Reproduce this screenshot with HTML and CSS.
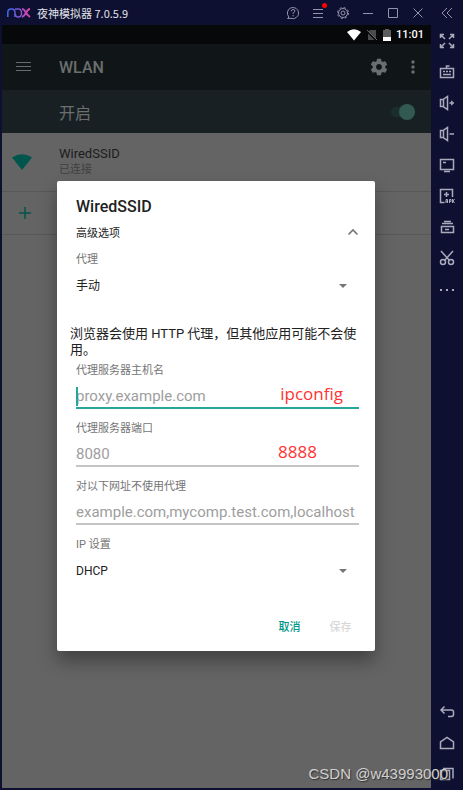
FILE: index.html
```
<!DOCTYPE html>
<html lang="zh-CN">

<head>
    <meta charset="UTF-8">
    <meta name="viewport" content="width=device-width, initial-scale=1.0">
    <title>夜神模拟器</title>
    <link rel="stylesheet" href="styles.css">
</head>

<body>
    <div class="window">
        <header class="titlebar">
            <svg class="logo" width="24" height="10" viewBox="0 0 24 10">
                <defs>
                    <linearGradient id="nox" x1="0" x2="24" y1="0" y2="0" gradientUnits="userSpaceOnUse">
                        <stop offset="0" stop-color="#3a6cf0" />
                        <stop offset=".5" stop-color="#7a55d8" />
                        <stop offset="1" stop-color="#f0409a" />
                    </linearGradient>
                </defs>
                <g fill="none" stroke="url(#nox)" stroke-width="1.5">
                    <path d="M.8 9V4.500Q.8 1 4 1h.8Q8 1 8 4.500V9" />
                    <path d="M8 1h3.500q3 0 3 4t-3 4h-.5q-2.500 0-2.800-3" />
                    <path stroke-width="2" d="M15 1q2 0 3.500 3t4.500 5M23 1q-2 0-3.800 3.500T15 9" />
                </g>
            </svg>
            <h1>夜神模拟器 7.0.5.9</h1>
            <div class="win-btns">
                <button aria-label="帮助"><svg width="14" height="14" viewBox="0 0 14 14"><path d="M1.500 12.500 3 11A5.600 5.600 0 1 1 5 12.300L1.500 12.500ZM5.300 5.300q0-1.800 1.800-1.800t1.800 1.500q0 1-1.800 2V8M7.100 9v1.300" /></svg></button>
                <button class="has-dot" aria-label="菜单"><svg width="14" height="14" viewBox="0 0 14 14"><path d="M2 3.500h10M2 7.500h10M2 11.500h10" /></svg></button>
                <button aria-label="设置"><svg width="14" height="14" viewBox="0 0 14 14"><circle cx="7" cy="7" r="4.500" /><circle cx="7" cy="7" r="2" /><circle cx="7" cy="7" r="5.500" stroke-dasharray="2.200 2.120" /></svg></button>
                <button aria-label="最小化"><svg width="14" height="14" viewBox="0 0 14 14"><path d="M2 7.500h10" /></svg></button>
                <button aria-label="最大化"><svg width="14" height="14" viewBox="0 0 14 14"><path d="M2.500 2.500h9v9h-9z" /></svg></button>
                <button aria-label="关闭"><svg width="14" height="14" viewBox="0 0 14 14"><path d="m2.500 2.500 9 9m0-9-9 9" /></svg></button>
                <button class="fold" aria-label="收起"><svg width="14" height="14" viewBox="0 0 14 14"><path d="M7 2 2 7l5 5M12 2 7 7l5 5" /></svg></button>
            </div>
        </header>

        <div class="main">
            <div class="screen">
                <div class="status">
                    <svg width="14" height="12" viewBox="0 0 14 12"><path fill="#fff" d="M0 3Q7-2.500 14 3L7 11.500Z" /></svg>
                    <svg width="12" height="12" viewBox="0 0 12 12"><path fill="#4a4c4c" d="M4 1h6v10H2V4z" /><path stroke="#08090a" stroke-width="2" d="m1 2 10 10" /><path stroke="#6a6c6c" d="m1 1 10 10" /></svg>
                    <svg width="8" height="12" viewBox="0 0 8 12"><path fill="#5c5e5e" d="M2 0h4v1h2v7H0V1h2z" /><path fill="#fff" d="M0 8h8v4H0z" /></svg>
                    <span>11:01</span>
                </div>

                <div class="toolbar">
                    <button class="lead" aria-label="导航"><svg width="16" height="12" viewBox="0 0 16 12"><path stroke="#686b6c" d="M0 1.500h15M0 5.500h15M0 9.500h15" /></svg></button>
                    <h2>WLAN</h2>
                    <button aria-label="设置"><svg width="20" height="20" viewBox="0 0 24 24"><path fill="#6b6e6f" d="M19.430 12.980c.04-.32.07-.64.07-.98s-.03-.66-.07-.98l2.110-1.650c.19-.15.24-.42.12-.64l-2-3.460c-.12-.22-.39-.3-.61-.22l-2.490 1c-.52-.4-1.080-.73-1.690-.98l-.38-2.650C14.460 2.180 14.250 2 14 2h-4c-.25 0-.46.18-.49.42l-.38 2.650c-.61.25-1.170.59-1.690.98l-2.490-1c-.23-.09-.49 0-.61.22l-2 3.460c-.13.22-.07.49.12.64l2.110 1.650c-.04.32-.07.65-.07.98s.03.66.07.98l-2.110 1.650c-.19.15-.24.42-.12.64l2 3.460c.12.22.39.3.61.22l2.490-1c.52.4 1.080.73 1.690.98l.38 2.650c.03.24.24.42.49.42h4c.25 0 .46-.18.49-.42l.38-2.650c.61-.25 1.170-.59 1.690-.98l2.490 1c.23.09.49 0 .61-.22l2-3.460c.12-.22.07-.49-.12-.64l-2.110-1.650zM12 15.500c-1.930 0-3.500-1.570-3.500-3.500s1.570-3.500 3.500-3.500 3.500 1.570 3.500 3.500-1.570 3.500-3.500 3.500z" /></svg></button>
                    <button aria-label="更多"><svg width="4" height="14" viewBox="0 0 4 14"><g fill="#6b6e6f"><circle cx="2" cy="2" r="1.700" /><circle cx="2" cy="7" r="1.700" /><circle cx="2" cy="12" r="1.700" /></g></svg></button>
                </div>

                <div class="switch-bar">
                    <label for="wlan">开启</label>
                    <input type="checkbox" id="wlan" class="switch" checked>
                </div>

                <ul class="networks">
                    <li class="network">
                        <svg width="20" height="16" viewBox="0 0 20 16"><path fill="#00564c" d="M0 3.500Q10-3 20 3.500L10 16Z" /></svg>
                        <div>
                            <p>WiredSSID</p>
                            <p class="sub">已连接</p>
                        </div>
                    </li>
                    <li class="network add">
                        <svg width="12" height="12" viewBox="0 0 12 12"><path stroke="#00564c" stroke-width="1.500" d="M6 0v12M0 6h12" /></svg>
                    </li>
                </ul>

                <div class="overlay">
                    <form class="dialog">
                        <h3>WiredSSID</h3>
                        <button type="button" class="advanced">高级选项
                            <svg width="12" height="8" viewBox="0 0 12 8"><path fill="none" stroke="#757575" stroke-width="1.600" d="m1.500 6.500 4.500-4.500 4.500 4.500" /></svg>
                        </button>
                        <div class="field">
                            <label for="proxy">代理</label>
                            <select id="proxy">
                                <option>手动</option>
                            </select>
                        </div>
                        <p class="tip">浏览器会使用 HTTP 代理，但其他应用可能不会使用。</p>
                        <div class="field focus">
                            <label for="host">代理服务器主机名</label>
                            <input type="text" id="host" placeholder="proxy.example.com">
                            <span class="note">ipconfig</span>
                        </div>
                        <div class="field">
                            <label for="port">代理服务器端口</label>
                            <input type="text" id="port" placeholder="8080">
                            <span class="note">8888</span>
                        </div>
                        <div class="field">
                            <label for="bypass">对以下网址不使用代理</label>
                            <input type="text" id="bypass" placeholder="example.com,mycomp.test.com,localhost">
                        </div>
                        <div class="field">
                            <label for="ip">IP 设置</label>
                            <select id="ip">
                                <option>DHCP</option>
                            </select>
                        </div>
                        <div class="actions">
                            <button type="button">取消</button>
                            <button type="button" disabled>保存</button>
                        </div>
                    </form>
                </div>
            </div>

            <nav class="sidebar">
                <button aria-label="全屏"><svg width="16" height="16" viewBox="0 0 16 16"><path d="M1.500 5V1.500H5M2 2l4 4M11 1.500h3.500V5M14 2l-4 4M1.500 11v3.500H5M2 14l4-4M14.500 11v3.500H11M14 14l-4-4" /></svg></button>
                <button aria-label="键盘"><svg width="16" height="16" viewBox="0 0 16 16"><path d="M1.500 4.500h13v9h-13zM7.500 4.500V2h3M4 7.500h2M7 7.500h2M10 7.500h2M4 10.500h8" /></svg></button>
                <button aria-label="音量加"><svg width="16" height="16" viewBox="0 0 16 16"><path d="M1.500 4.500H4L8.500 1.500v13L4 11.500H1.500zM4.500 4.500v7M10.500 8H15M12.800 5.800v4.500" /></svg></button>
                <button aria-label="音量减"><svg width="16" height="16" viewBox="0 0 16 16"><path d="M1.500 4.500H4L8.500 1.500v13L4 11.500H1.500zM4.500 4.500v7M10.500 8H15" /></svg></button>
                <button aria-label="屏幕"><svg width="16" height="16" viewBox="0 0 16 16"><path d="M1.500 2.500h13v10h-13zM4 5.500h3M5 14.500h6" /></svg></button>
                <button aria-label="安装APK"><svg width="16" height="16" viewBox="0 0 16 16"><path d="M5.500 14.500h-4v-13h12V9M7.500 4v5M5 6.500h5" /><path stroke-width="1" d="M7 15v-3.500h1.500V15M7 13.500h1.500M10.500 15v-3.500H12v2h-1.500M13.500 11v4M15.500 11l-1.500 2 1.500 2" /></svg></button>
                <button aria-label="多开"><svg width="16" height="16" viewBox="0 0 16 16"><path d="M2.500 7.500h12v6h-12zM3 4.500h11M5 2.500h7M6 10.500h4" /></svg></button>
                <button aria-label="剪切"><svg width="16" height="16" viewBox="0 0 16 16"><path d="m2 1 8.500 9.500M14 1 5.500 10.500" /><circle cx="4" cy="12" r="2.500" /><circle cx="12" cy="12" r="2.500" /></svg></button>
                <button aria-label="更多"><svg width="16" height="16" viewBox="0 0 16 16"><path stroke-width="2" stroke-dasharray="2 4" d="M1 9h14" /></svg></button>
                <button class="back" aria-label="返回"><svg width="16" height="16" viewBox="0 0 16 16"><path d="M5.500 2.500 2 6l3.500 3.500M2 6h10.500q2 0 2 2v2.500q0 2-2 2H9" /></svg></button>
                <button aria-label="主页"><svg width="16" height="16" viewBox="0 0 16 16"><path d="M1.500 13.500V7L8 2.500 14.500 7v6.500z" /></svg></button>
                <button aria-label="最近任务"><svg width="16" height="16" viewBox="0 0 16 16"><path d="M1.500 4.500h9v9h-9zM4 2.500h10v10" /></svg></button>
            </nav>
        </div>
        <span class="watermark">CSDN @w43993000</span>
    </div>
</body>

</html>
```
FILE: styles.css
```
* {
    box-sizing: border-box;
    margin: 0;
    padding: 0;
}

body {
    font-family: Roboto, "Noto Sans CJK SC", sans-serif;
    font-size: 12px;
    background: #0d1030;
}

button,
input,
select {
    border: none;
    background: none;
    font-family: inherit;
    outline: none;
}

button {
    display: flex;
    align-items: center;
    justify-content: center;
}

ul {
    list-style: none;
}

.window {
    position: relative;
    display: flex;
    flex-direction: column;
    min-height: 100vh;
}

/* 标题栏 */
.titlebar {
    display: flex;
    align-items: center;
    height: 25px;
    padding: 0 0 0 7px;
    color: #e2e2ea;
}

.titlebar h1 {
    margin-left: 6px;
    font: 11px "Noto Sans CJK SC", sans-serif;
}

.win-btns {
    display: flex;
    margin-left: auto;
}

.win-btns button {
    position: relative;
    width: 25px;
    height: 25px;
}

.win-btns .fold {
    width: 33px;
}

.win-btns svg {
    fill: none;
    stroke: #9194aa;
}

.has-dot::after {
    content: "";
    position: absolute;
    top: 3px;
    right: 3px;
    width: 5px;
    height: 5px;
    border-radius: 50%;
    background: #f00;
}

.main {
    display: flex;
    flex: 1;
    padding-left: 2px;
}

/* 安卓屏幕 */
.screen {
    position: relative;
    flex: 1;
    margin-bottom: 2px;
    background: #646464;
}

.status {
    display: flex;
    align-items: center;
    justify-content: flex-end;
    gap: 5px;
    height: 19px;
    padding-right: 7px;
    background: #060809;
    color: #fff;
    font-size: 11px;
    font-weight: 500;
}

.toolbar {
    display: flex;
    align-items: center;
    height: 46px;
    padding: 0 16px 0 14px;
    background: #101617;
}

.toolbar h2 {
    flex: 1;
    margin-left: 27px;
    font-size: 16px;
    font-weight: 500;
    color: #6b6e6f;
}

.toolbar button + button {
    margin-left: 22px;
}

.switch-bar {
    display: flex;
    align-items: center;
    justify-content: space-between;
    height: 43px;
    padding: 0 16px 0 57px;
    background: #182023;
    font-size: 16px;
    color: #6b6f70;
}

.switch {
    position: relative;
    appearance: none;
    width: 24px;
    height: 16px;
}

.switch::before {
    content: "";
    position: absolute;
    top: 3px;
    left: 0;
    width: 20px;
    height: 10px;
    border-radius: 5px;
    background: #1c2d2d;
}

.switch::after {
    content: "";
    position: absolute;
    right: 0;
    width: 16px;
    height: 16px;
    border-radius: 50%;
    background: #325a53;
}

.network {
    display: flex;
    align-items: center;
    gap: 27px;
    height: 59px;
    padding-left: 10px;
    border-bottom: 1px solid #585858;
    font-size: 13px;
    line-height: 16px;
    color: #1c1c1c;
}

.network .sub {
    font-size: 11px;
    color: #404040;
}

.network.add {
    height: 43px;
    padding-left: 17px;
}

/* 弹窗 */
.overlay {
    position: absolute;
    top: 19px;
    right: 0;
    bottom: 0;
    left: 0;
    display: flex;
    align-items: center;
    justify-content: center;
    padding: 0 56px 0 55px;
}

.dialog {
    width: 100%;
    padding: 15px 16px 7px 19px;
    border-radius: 2px;
    background: #fff;
    box-shadow: 0 10px 18px rgba(0, 0, 0, .35);
    color: #212121;
}

.dialog h3 {
    font-size: 16px;
    line-height: 22px;
    font-weight: 500;
}

.advanced {
    justify-content: space-between;
    width: 100%;
    height: 28px;
    margin-bottom: 6px;
    color: #212121;
    font-size: 11px;
}

.field {
    position: relative;
    margin-bottom: 12px;
}

.field label {
    display: block;
    font-size: 11px;
    line-height: 16px;
    color: #757575;
}

.field input {
    display: block;
    width: 100%;
    height: 30px;
    padding-top: 5px;
    border-bottom: 2px solid #c4c4c4;
    font-size: 15px;
    color: #212121;
}

.field input::placeholder {
    color: #9e9e9e;
}

.field.focus input {
    border-color: #26a69a;
}

/* 光标 */
.field.focus::after {
    content: "";
    position: absolute;
    top: 24px;
    left: 0;
    width: 2px;
    height: 19px;
    background: #26a69a;
}

.field select {
    display: block;
    appearance: none;
    width: 100%;
    height: 30px;
    padding-top: 5px;
    font-size: 12px;
    color: #212121;
}

.field:has(select)::after {
    content: "";
    position: absolute;
    top: 32px;
    right: 12px;
    border: 4px solid transparent;
    border-top-color: #757575;
    border-bottom: none;
}

.note {
    position: absolute;
    top: 20px;
    right: 16px;
    font: 17px/22px "Open Sans", sans-serif;
    color: #f33;
}

.field:not(.focus) .note {
    right: 42px;
}

.tip {
    margin: 28px -10px 5px -6px;
    font-size: 13px;
    line-height: 16px;
}

.actions {
    display: flex;
    justify-content: flex-end;
    gap: 2px;
    margin: 25px -6px 0 0;
}

.actions button {
    width: 49px;
    height: 36px;
    font-size: 11px;
    font-weight: 500;
    color: #009688;
}

.actions button:disabled {
    color: #d8d8d8;
}

/* 右侧工具栏 */
.sidebar {
    display: flex;
    flex-direction: column;
    width: 32px;
    padding-bottom: 1px;
}

.sidebar button {
    height: 31px;
}

.sidebar svg {
    fill: none;
    stroke: #a9abbd;
    stroke-width: 1.5;
}

.sidebar .back {
    margin-top: auto;
}

.watermark {
    position: absolute;
    right: 15px;
    bottom: 8px;
    font: 15px "Liberation Sans", sans-serif;
    color: #d0d0d0;
    text-shadow: 1px 1px 1px #333;
}
```
